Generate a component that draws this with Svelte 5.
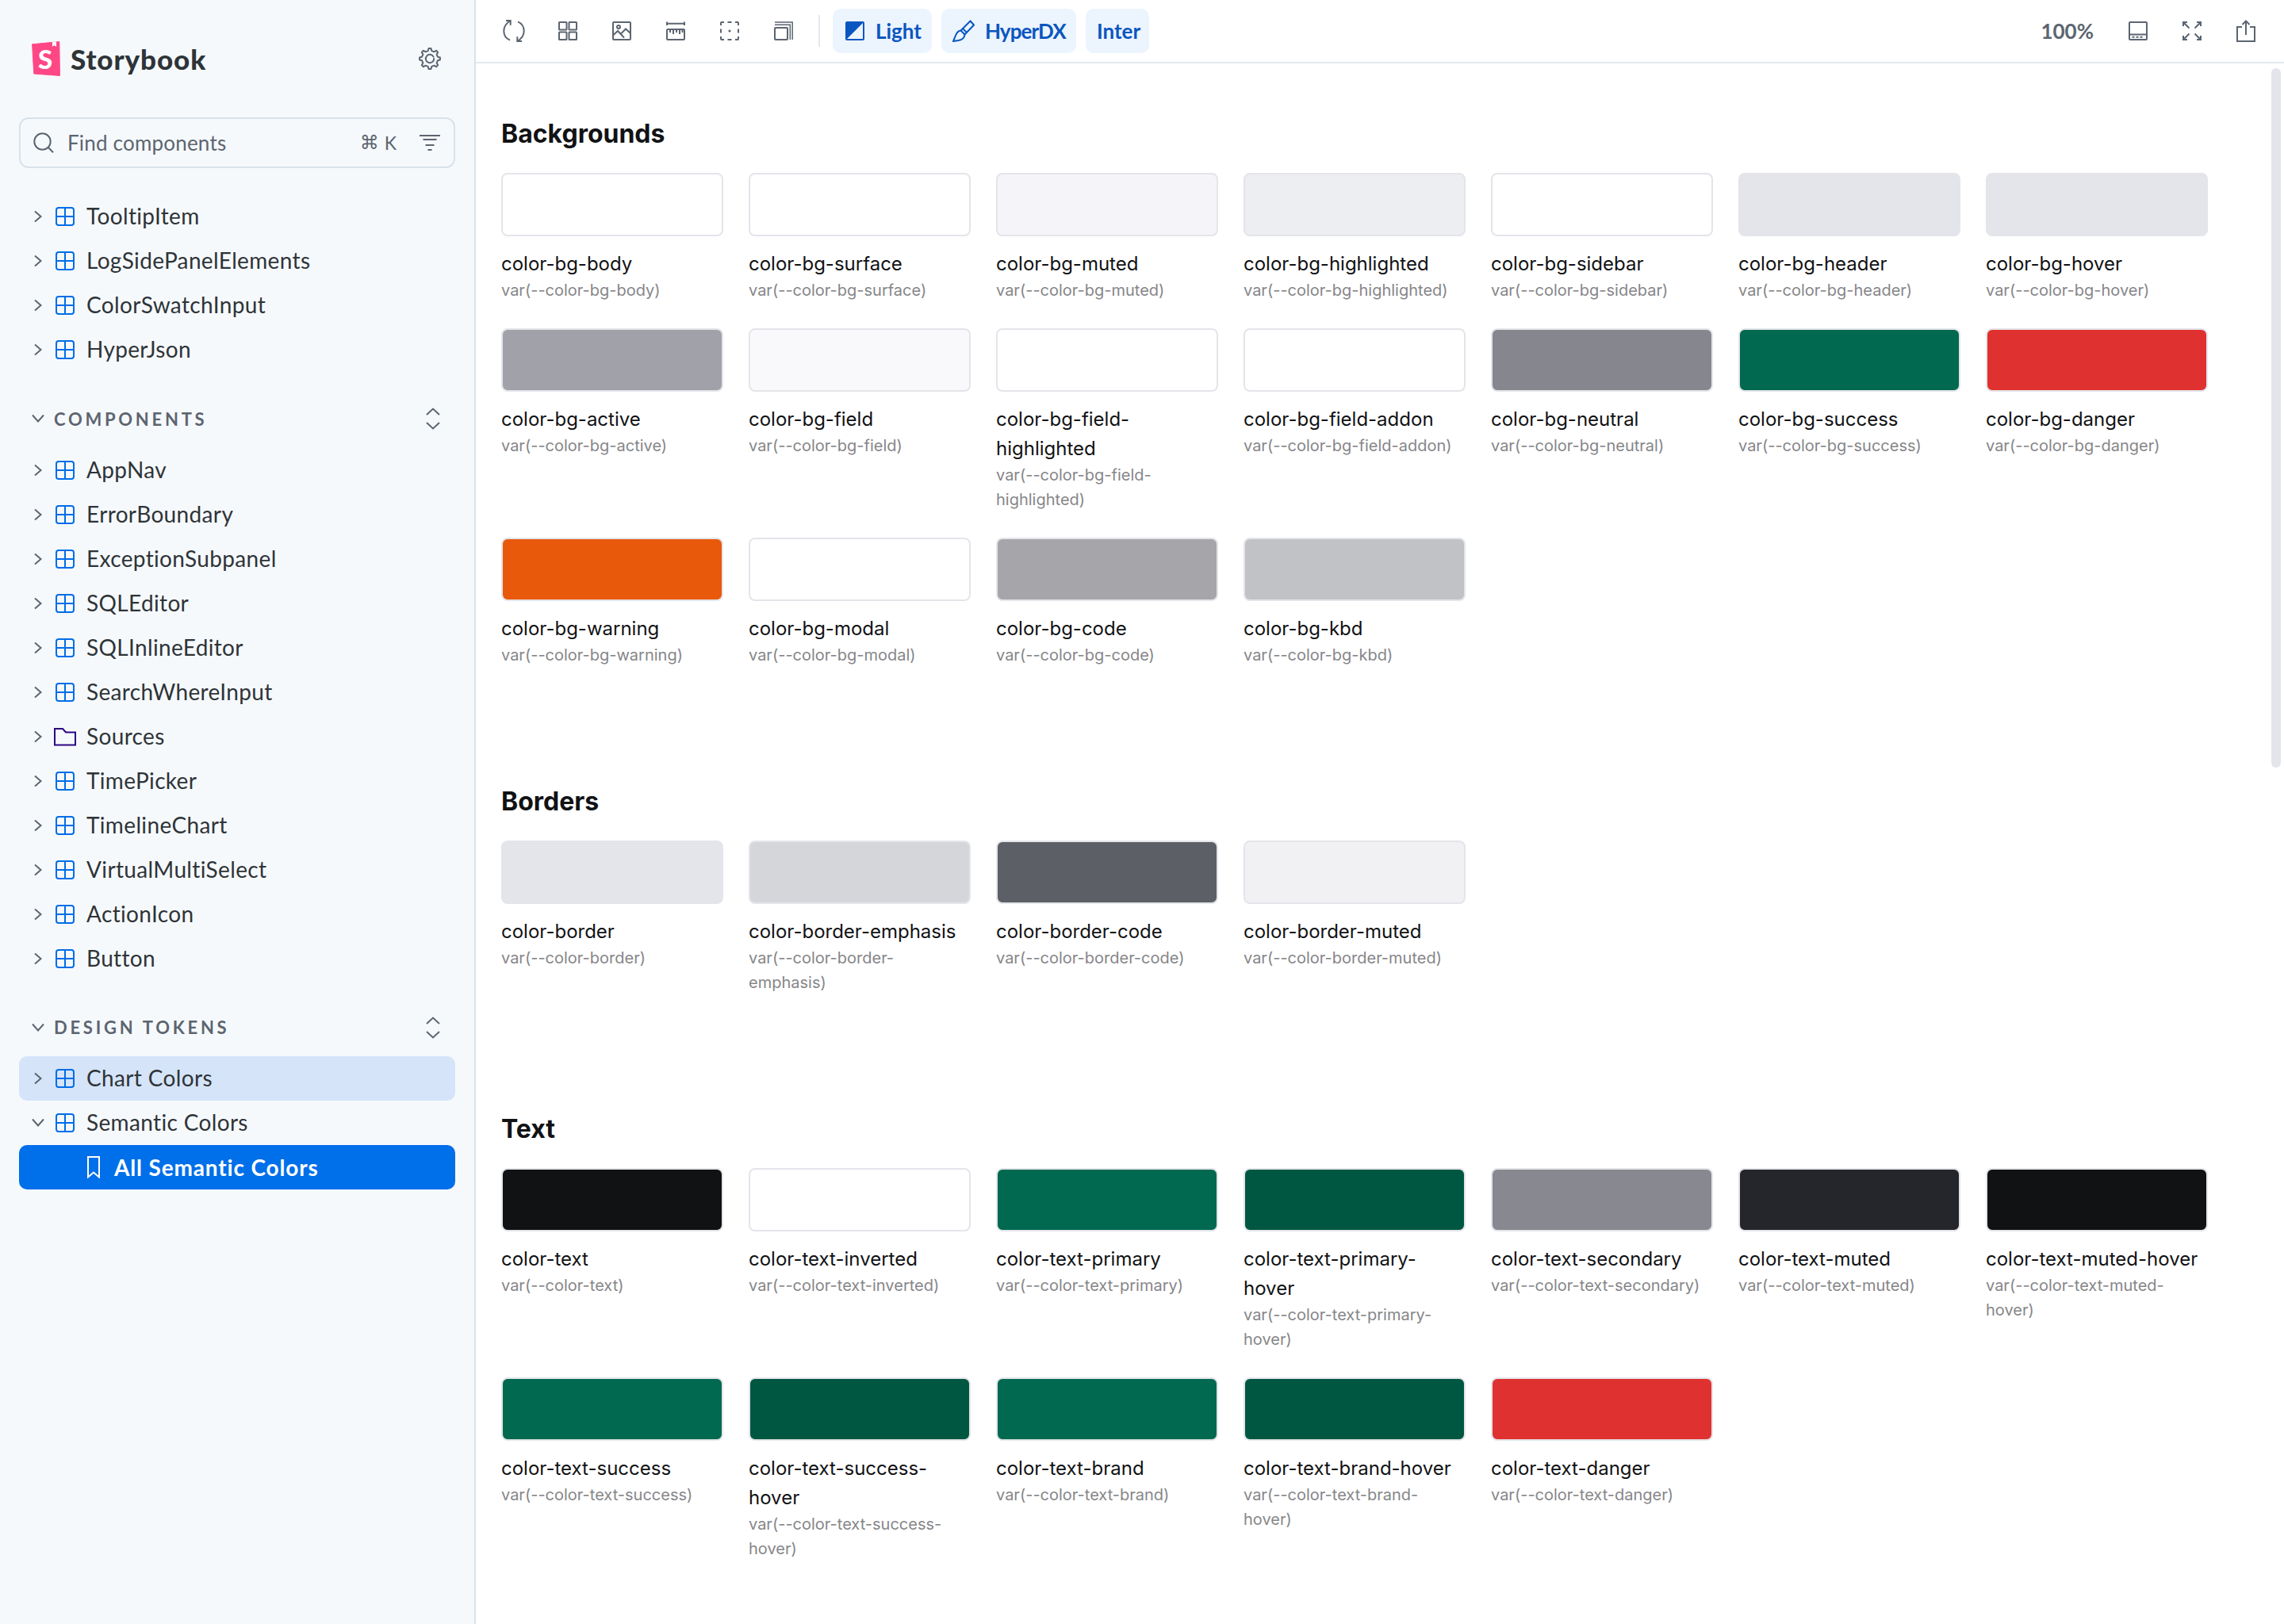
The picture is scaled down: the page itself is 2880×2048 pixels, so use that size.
<script>
  const topItems = [['TooltipItem'], ['LogSidePanelElements'], ['ColorSwatchInput'], ['HyperJson']];
  const compItems = ['AppNav', 'ErrorBoundary', 'ExceptionSubpanel', 'SQLEditor', 'SQLInlineEditor', 'SearchWhereInput', 'Sources', 'TimePicker', 'TimelineChart', 'VirtualMultiSelect', 'ActionIcon', 'Button'];

  const sections = [
    {
      title: 'Backgrounds',
      items: [
        ['color-bg-body', '#ffffff'], ['color-bg-surface', '#ffffff'], ['color-bg-muted', '#f5f5f9'], ['color-bg-highlighted', '#edeef2'],
        ['color-bg-sidebar', '#ffffff'], ['color-bg-header', '#e4e5ea'], ['color-bg-hover', '#e4e5ea'],
        ['color-bg-active', '#a1a1aa'], ['color-bg-field', '#f9f9fb'], ['color-bg-field-highlighted', '#ffffff'], ['color-bg-field-addon', '#ffffff'],
        ['color-bg-neutral', '#86868f'], ['color-bg-success', '#00694f'], ['color-bg-danger', '#e03131'],
        ['color-bg-warning', '#e8590c'], ['color-bg-modal', '#ffffff'], ['color-bg-code', '#a6a6aa'], ['color-bg-kbd', '#c1c2c5']
      ]
    },
    {
      title: 'Borders',
      items: [['color-border', '#e4e5ea'], ['color-border-emphasis', '#d5d6da'], ['color-border-code', '#5c5f66'], ['color-border-muted', '#f1f1f3']]
    },
    {
      title: 'Text',
      items: [
        ['color-text', '#111214'], ['color-text-inverted', '#ffffff'], ['color-text-primary', '#00694f'], ['color-text-primary-hover', '#005741'],
        ['color-text-secondary', '#888890'], ['color-text-muted', '#25262b'], ['color-text-muted-hover', '#111214'],
        ['color-text-success', '#00694f'], ['color-text-success-hover', '#005741'], ['color-text-brand', '#00694f'], ['color-text-brand-hover', '#005741'], ['color-text-danger', '#e03131']
      ]
    }
  ];

  function gearPath() {
    const cx = 14, cy = 14, teeth = 8, pts = [];
    for (let i = 0; i < teeth; i++) {
      const a = (i / teeth) * Math.PI * 2 - Math.PI / 2;
      const step = Math.PI / teeth;
      [[-0.5, 10.2], [-0.25, 13], [0.25, 13], [0.5, 10.2]].forEach(([d, r]) => {
        const t = a + d * step * 1.15;
        pts.push((cx + Math.cos(t) * r).toFixed(2) + ' ' + (cy + Math.sin(t) * r).toFixed(2));
      });
    }
    return 'M' + pts.join('L') + 'Z';
  }
  const gear = gearPath();
</script>

{#snippet chevRight()}
  <svg class="chev-r" width="12" height="16" viewBox="0 0 12 16"><polyline points="2,1.5 9.5,8 2,14.5" /></svg>
{/snippet}
{#snippet chevDown()}
  <svg class="chev-d" width="16" height="12" viewBox="0 0 16 12"><polyline points="1,1.5 8,9.5 15,1.5" /></svg>
{/snippet}
{#snippet gridIcon()}
  <svg class="grid-ic" width="24" height="24" viewBox="0 0 24 24"><rect x="1" y="1" width="22" height="22" rx="3" /><path d="M12 1V23M1 12H23" /></svg>
{/snippet}
{#snippet folderIcon()}
  <svg class="folder-ic" width="28" height="24" viewBox="0 0 28 24"><path d="M1 2H11L15 6.5H27V22.5H1Z" /></svg>
{/snippet}
{#snippet treeRow(name, folder)}
  <div class="row">
    {@render chevRight()}
    {#if folder}{@render folderIcon()}{:else}{@render gridIcon()}{/if}
    <span class="row-label" class:folder-label={folder}>{name}</span>
  </div>
{/snippet}
{#snippet sectionHead(name)}
  <div class="sec-head">
    {@render chevDown()}
    <span class="sec-label">{name}</span>
    <svg class="expand" width="18" height="28" viewBox="0 0 18 28"><polyline points="1,9 9,1.5 17,9" /><polyline points="1,19 9,26.5 17,19" /></svg>
  </div>
{/snippet}

<div class="app">
  <aside class="sidebar">
    <div class="brand">
      <div class="logo-wrap">
        <svg class="logo" width="36" height="44" viewBox="0 0 36 44">
          <path d="M0.6 3.8L34.8 .6L35.4 43.4L2.8 41Z" fill="#ff4785" stroke="#ff4785" stroke-linejoin="round" />
          <polygon points="26,1 31,.6 31,7 28.5,5 26,7" fill="#ffffff" />
          <text x="17" y="35" text-anchor="middle" class="logo-s">S</text>
        </svg>
        <span class="wordmark">Storybook</span>
      </div>
      <svg class="gear" width="28" height="28" viewBox="0 0 28 28">
        <path d={gear} />
        <path d="M18.6 11.6A5.2 5.2 0 1 0 19.2 14" />
      </svg>
    </div>

    <div class="search">
      <svg class="mag" width="26" height="26" viewBox="0 0 26 26"><circle cx="11.5" cy="11.5" r="10.2" /><path d="M19 19L25 25.2" /></svg>
      <span class="search-text">Find components</span>
      <span class="cmd">⌘</span>
      <span class="kkey">K</span>
      <svg class="filter" width="26" height="20" viewBox="0 0 26 20"><path d="M0 1H26M4.5 6H21.5M7.5 13H18.500M10.500 19H15.500" /></svg>
    </div>

    <div class="group first">
      {#each topItems as it}{@render treeRow(it[0], false)}{/each}
    </div>

    {@render sectionHead('COMPONENTS')}
    <div class="group">
      {#each compItems as it}{@render treeRow(it, it === 'Sources')}{/each}
    </div>

    {@render sectionHead('DESIGN TOKENS')}
    <div class="group">
      <div class="row hover">
        {@render chevRight()}
        {@render gridIcon()}
        <span class="row-label">Chart Colors</span>
      </div>
      <div class="row open">
        {@render chevDown()}
        {@render gridIcon()}
        <span class="row-label">Semantic Colors</span>
      </div>
      <div class="row selected">
        <svg class="bookmark" width="16" height="28" viewBox="0 0 16 28"><path d="M1 1H15V26.500L8 20.500L1 26.500Z" /></svg>
        <span class="selected-label">All Semantic Colors</span>
      </div>
    </div>
  </aside>

  <div class="main">
    <header class="toolbar">
      <div class="tools">
        <button class="tool" aria-label="Reload">
          <svg width="28" height="28" viewBox="0 0 28 28">
            <path d="M4 1H9.700V6.700M9.700 1C3 5 1.300 9 1.300 14C1.300 19 4 23.500 9 25.700" />
            <path d="M24 27H18.300V21.300M18.300 27C25 23 26.700 19 26.700 14C26.700 9 24 4.500 19 2.300" />
          </svg>
        </button>
        <button class="tool" aria-label="Grid">
          <svg width="24" height="24" viewBox="0 0 24 24">
            <rect x="1" y="1" width="9.500" height="9.500" rx=".6" /><rect x="13.500" y="1" width="9.500" height="9.500" rx=".6" />
            <rect x="1" y="13.500" width="9.500" height="9.500" rx=".6" /><rect x="13.500" y="13.500" width="9.500" height="9.500" rx=".6" />
          </svg>
        </button>
        <button class="tool" aria-label="Background">
          <svg width="24" height="24" viewBox="0 0 24 24">
            <rect x="1" y="1" width="22" height="22" rx="1" />
            <circle cx="8" cy="7" r="2" />
            <path d="M1 17.500L7 12L15 20.500M11 15.500L17 9.500L23 15" />
          </svg>
        </button>
        <button class="tool" aria-label="Measure">
          <svg width="24" height="24" viewBox="0 0 24 24">
            <path d="M1 .5V5M23 .5V5M1 2.800H23" />
            <rect x="1" y="10" width="22" height="13" rx="1" />
            <path d="M5 10V14M9 10V16M13 10V14M17 10V16M20.500 10V14" />
          </svg>
        </button>
        <button class="tool" aria-label="Outline">
          <svg width="24" height="24" viewBox="0 0 24 24">
            <path class="dash" d="M1 5V2A1 1 0 0 1 2 1H5M9.500 1H14.500M19 1H22A1 1 0 0 1 23 2V5M23 9.500V14.500M23 19V22A1 1 0 0 1 22 23H19M14.500 23H9.500M5 23H2A1 1 0 0 1 1 22V19M1 14.500V9.500" />
            <circle class="dot" cx="12" cy="12" r="1.600" />
          </svg>
        </button>
        <button class="tool" aria-label="Viewport">
          <svg width="24" height="24" viewBox="0 0 24 24">
            <rect x="1" y="8" width="16" height="15" rx="1" />
            <path class="thin" d="M1 4.300H20.300V23M1 1H23.200V23" />
          </svg>
        </button>
        <span class="divider"></span>
      </div>
      <div class="pills">
        <button class="pill pill-light">
          <svg width="24" height="24" viewBox="0 0 24 24">
            <rect class="pill-outline" x="1" y="1" width="22" height="22" rx="1" />
            <path class="pill-fill" d="M1 1H23L1 23Z" />
          </svg>
          <span>Light</span>
        </button>
        <button class="pill pill-hyper">
          <svg width="28" height="28" viewBox="0 0 28 28">
            <path class="pill-outline" d="M22.500 1.500L27 6.500L15.500 18.500L10.500 13.500Z" />
            <path class="pill-outline" d="M13 11L18 16" />
            <path class="pill-outline" d="M10.500 13.500C6 14 4.500 18 3.500 21L1 27L7.500 26C11 25.500 15 23.500 15.500 18.500" />
          </svg>
          <span class="hyper-text">HyperDX</span>
        </button>
        <button class="pill pill-inter"><span>Inter</span></button>
      </div>
      <div class="spacer"></div>
      <div class="right-tools">
        <span class="zoom">100%</span>
        <button class="tool" aria-label="Panel">
          <svg width="24" height="24" viewBox="0 0 24 24">
            <rect x="1" y="1" width="22" height="22" rx="1" />
            <path d="M1 16.500H23" />
            <path class="dash2" d="M4.500 19.800H19.500" />
          </svg>
        </button>
        <button class="tool" aria-label="Fullscreen">
          <svg width="24" height="24" viewBox="0 0 24 24">
            <path d="M1 6V1H6M1 1L8.500 8.500M18 1H23V6M23 1L15.500 8.500M1 18V23H6M1 23L8.500 15.500M18 23H23V18M23 23L15.500 15.500" />
          </svg>
        </button>
        <button class="tool" aria-label="Share">
          <svg width="24" height="28" viewBox="0 0 24 28">
            <path d="M7 9H1V27H23V9H17" />
            <path d="M12 19V1.500M7.500 6L12 1.500L16.500 6" />
          </svg>
        </button>
      </div>
    </header>

    <main class="content">
      {#each sections as s}
        <section class="tokens">
          <h2>{s.title}</h2>
          <div class="swatches">
            {#each s.items as [name, color]}
              <div class="token">
                <div class="swatch" style:background={color}></div>
                <div class="name">{name}</div>
                <div class="var">var(--{name})</div>
              </div>
            {/each}
          </div>
        </section>
      {/each}
    </main>
    <div class="scrollbar"></div>
  </div>
</div>

<style>
  :global(html), :global(body) { margin: 0; background: #fff; }
  * { box-sizing: border-box; }
  .app { display: flex; width: 2880px; height: 2048px; overflow: hidden; position: relative; }

  .sidebar {
    width: 600px; flex: none; height: 100%;
    background: #f6f9fc; border-right: 2px solid #d8e2ea;
    padding: 52px 24px 0 24px;
    font-family: "Lato", "Open Sans", sans-serif;
    color: #2e3438;
  }
  .brand { display: flex; align-items: center; justify-content: space-between; height: 44px; padding: 0 18px 0 16px; }
  .logo-wrap { display: flex; align-items: center; gap: 13px; }
  .logo { display: block; }
  .logo-s { font-family: "Lato", sans-serif; font-weight: 900; font-size: 33px; fill: #fff; }
  .wordmark { font-size: 35px; font-weight: 900; letter-spacing: 0.9px; color: #2e3438; line-height: 44px; }
  .gear { fill: none; stroke: #5c6570; stroke-width: 2; stroke-linejoin: round; stroke-linecap: round; }

  .search {
    margin-top: 52px; height: 64px; border: 2px solid #d8e2ea; border-radius: 12px;
    display: flex; align-items: center; padding: 0 17px 0 16px; color: #5c6570;
  }
  .mag { fill: none; stroke: #5c6570; stroke-width: 2; flex: none; }
  .search-text { margin-left: 17px; font-size: 26px; flex: 1; letter-spacing: 0.2px; }
  .cmd { font-family: "DejaVu Sans", sans-serif; font-size: 24px; }
  .kkey { margin-left: 7px; font-size: 23px; }
  .filter { fill: none; stroke: #5c6570; stroke-width: 2; margin-left: 29px; flex: none; }

  .group.first { margin-top: 33px; }
  .row { height: 56px; display: flex; align-items: center; padding-left: 18px; border-radius: 10px; }
  .row svg { flex: none; }
  .chev-r, .chev-d { fill: none; stroke: #5c6570; stroke-width: 2; display: block; }
  .grid-ic { fill: none; stroke: #006de8; stroke-width: 2; margin-left: 16px; display: block; }
  .folder-ic { fill: none; stroke: #2a0481; stroke-width: 2; margin-left: 14px; display: block; }
  .row-label { margin-left: 15px; font-size: 28px; line-height: 40px; padding-bottom: 2px; letter-spacing: 0.35px; color: #2e3438; }
  .folder-label { margin-left: 13px; }
  .row.hover { background: #d5e4f9; }
  .row.open { padding-left: 16px; }
  .row.open .grid-ic { margin-left: 14px; }
  .row.selected { background: #006fea; color: #fff; padding-left: 86px; }
  .bookmark { fill: none; stroke: #fff; stroke-width: 2; display: block; }
  .selected-label { margin-left: 18px; font-size: 28px; font-weight: 700; letter-spacing: 0.85px; color: #fff; }

  .sec-head { margin: 40px 0 17.5px; height: 38px; display: flex; align-items: center; padding: 0 19px 0 16px; }
  .sec-label { margin-left: 12px; font-size: 22px; font-weight: 700; letter-spacing: 0.17em; color: #5c6570; flex: 1; }
  .expand { fill: none; stroke: #5c6570; stroke-width: 2; }

  .main { flex: 1; min-width: 0; height: 100%; position: relative; display: flex; flex-direction: column; }
  .toolbar {
    height: 80px; flex: none; border-bottom: 2px solid #e3e8ed; background: #fff;
    display: flex; align-items: center; padding: 0 14px;
    font-family: "Lato", sans-serif;
  }
  .tools, .right-tools, .pills { display: flex; align-items: center; }
  .tool {
    width: 68px; height: 56px; padding: 0; border: 0; background: none;
    display: flex; align-items: center; justify-content: center;
  }
  .tool svg { fill: none; stroke: #5c6570; stroke-width: 2; display: block; }
  .tool .dot { fill: #5c6570; stroke: none; }
  .tool .dash2 { stroke-dasharray: 3 2; }
  .tool .thin { stroke-width: 1.5; }
  .divider { width: 2px; height: 40px; background: #e3e8ed; margin-left: 10px; }
  .pills { gap: 12px; margin-left: 16px; }
  .pill {
    height: 56px; border: 0; border-radius: 10px; background: #ecf4fe; padding: 0;
    display: flex; align-items: center; color: #0a56c0;
    font-family: "Lato", sans-serif; font-size: 26px; font-weight: 700;
  }
  .pill-light { width: 125px; padding-left: 16px; gap: 14px; }
  .pill-hyper { width: 170px; padding-left: 14px; gap: 13px; }
  .hyper-text { letter-spacing: -0.9px; }
  .pill-inter { width: 80px; padding-left: 14px; }
  .pill svg { display: block; flex: none; }
  .pill-outline { fill: none; stroke: #0a56c0; stroke-width: 2; }
  .pill-fill { fill: #0a56c0; }
  .spacer { flex: 1; }
  .zoom { font-size: 26px; font-weight: 700; color: #5c6570; margin-right: 22px; }

  .content { padding: 70px 0 0 32px; font-family: "Inter", sans-serif; overflow: hidden; flex: 1; }
  .tokens { margin-bottom: 150px; }
  h2 { margin: 0 0 30px; font-size: 32px; line-height: 38px; font-weight: 700; color: #111214; }
  .swatches { display: grid; grid-template-columns: repeat(7, 280px); column-gap: 32px; row-gap: 32px; }
  .swatch { height: 80px; border: 2px solid #e4e5ea; border-radius: 8px; margin-bottom: 16px; }
  .name { font-size: 24px; line-height: 37px; color: #111214; }
  .var { font-size: 20px; line-height: 31px; color: #868689; }
  .scrollbar { position: absolute; right: 4px; top: 86px; width: 12px; height: 882px; border-radius: 6px; background: #e4e5ea; }
</style>
